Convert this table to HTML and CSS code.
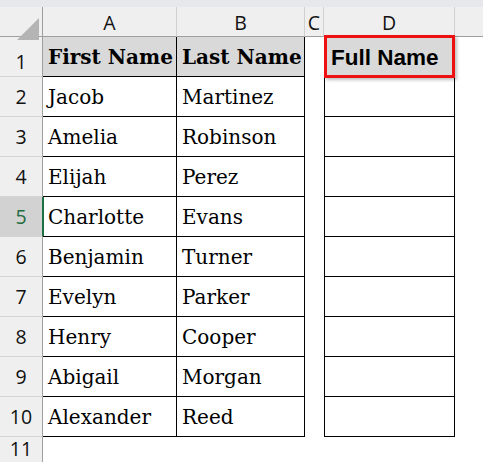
FILE: index.html
```html
<!DOCTYPE html>
<html>
<head>
<meta charset="utf-8">
<link rel="stylesheet" href="styles.css">
</head>
<body>
<div class="sheet">
  <div class="strip"></div>

  <div class="corner"><span class="tri"></span></div>
  <div class="colh">A</div>
  <div class="colh">B</div>
  <div class="colh">C</div>
  <div class="colh">D</div>
  <div class="colh last"></div>

  <div class="rowh first">1</div>
  <div class="cell hdr">First Name</div>
  <div class="cell hdr">Last Name</div>
  <div class="gap"></div>
  <div class="cell d hdr sel"><span class="full">Full Name</span></div>
  <div class="gap"></div>

  <div class="rowh">2</div><div class="cell">Jacob</div><div class="cell">Martinez</div><div class="gap"></div><div class="cell d"></div><div class="gap"></div>
  <div class="rowh">3</div><div class="cell">Amelia</div><div class="cell">Robinson</div><div class="gap"></div><div class="cell d"></div><div class="gap"></div>
  <div class="rowh">4</div><div class="cell">Elijah</div><div class="cell">Perez</div><div class="gap"></div><div class="cell d"></div><div class="gap"></div>
  <div class="rowh active">5</div><div class="cell act">Charlotte</div><div class="cell">Evans</div><div class="gap"></div><div class="cell d"></div><div class="gap"></div>
  <div class="rowh">6</div><div class="cell">Benjamin</div><div class="cell">Turner</div><div class="gap"></div><div class="cell d"></div><div class="gap"></div>
  <div class="rowh">7</div><div class="cell">Evelyn</div><div class="cell">Parker</div><div class="gap"></div><div class="cell d"></div><div class="gap"></div>
  <div class="rowh">8</div><div class="cell">Henry</div><div class="cell">Cooper</div><div class="gap"></div><div class="cell d"></div><div class="gap"></div>
  <div class="rowh">9</div><div class="cell">Abigail</div><div class="cell">Morgan</div><div class="gap"></div><div class="cell d"></div><div class="gap"></div>
  <div class="rowh">10</div><div class="cell">Alexander</div><div class="cell">Reed</div><div class="gap"></div><div class="cell d"></div><div class="gap"></div>

  <div class="rowh tail">11</div><div class="gap span5"></div>
</div>
</body>
</html>
```

FILE: styles.css
```css
* { box-sizing: border-box; }
html, body { margin: 0; padding: 0; background: #fff; }
.sheet {
  width: 483px;
  height: 462px;
  overflow: hidden;
  display: grid;
  grid-template-columns: 43px 134px 128px 19px 131px 1fr;
  grid-template-rows: 7px 30px repeat(10, 40px) 1fr;
}
.strip {
  grid-column: 1 / -1;
  background: #e6e8eb;
}
.corner {
  background: #efefef;
  border-right: 1px solid #9f9f9f;
  border-bottom: 1px solid #9f9f9f;
  position: relative;
}
.tri {
  position: absolute;
  left: 17px;
  top: 11px;
  width: 0;
  height: 0;
  border-left: 22px solid transparent;
  border-bottom: 22px solid #b4b4b4;
}
.colh {
  background: #efefef;
  border-right: 1px solid #d0d0d0;
  border-bottom: 1px solid #9f9f9f;
  font-family: "Open Sans", "Liberation Sans", sans-serif;
  font-size: 19.5px;
  color: #111;
  display: flex;
  align-items: center;
  justify-content: center;
  padding-top: 1px;
}
.colh.last { border-right: none; }
.rowh {
  background: #efefef;
  border-right: 1px solid #9f9f9f;
  border-bottom: 1px solid #d4d4d4;
  font-family: "Open Sans", "Liberation Sans", sans-serif;
  font-size: 19.5px;
  color: #111;
  display: flex;
  align-items: center;
  justify-content: center;
}
.rowh.first { padding-top: 10px; }
.rowh.tail {
  align-items: flex-start;
  line-height: 22px;
  padding-top: 1px;
  border-bottom: none;
}
.rowh.active {
  background: #d2d2d2;
  color: #1e6b41;
  border-right-color: #1e7145;
}
.cell {
  border-right: 1px solid #000;
  border-bottom: 1px solid #000;
  font-family: "DejaVu Serif", serif;
  font-size: 20px;
  color: #000;
  display: flex;
  align-items: center;
  padding-left: 5px;
  padding-top: 1px;
  white-space: nowrap;
}
.cell.hdr {
  background: #d9d9d9;
  font-weight: bold;
  padding-left: 5px;
}
.cell.d { border-left: 1px solid #000; }
.cell.act { box-shadow: inset 1px 0 0 #1e7145; }
.gap { background: #fff; }
.span5 { grid-column: 2 / -1; }
.cell.sel { position: relative; }
.cell.sel::after {
  content: "";
  position: absolute;
  left: -1px;
  top: -2px;
  right: -1px;
  bottom: -2px;
  border: 3px solid #ee1111;
  box-shadow: 2px 2px 3px rgba(0, 0, 0, 0.25);
}
.full {
  font-family: "Liberation Sans", Arial, sans-serif;
  font-size: 22.5px;
  font-weight: bold;
  padding-left: 1px;
  padding-top: 1px;
}
```
